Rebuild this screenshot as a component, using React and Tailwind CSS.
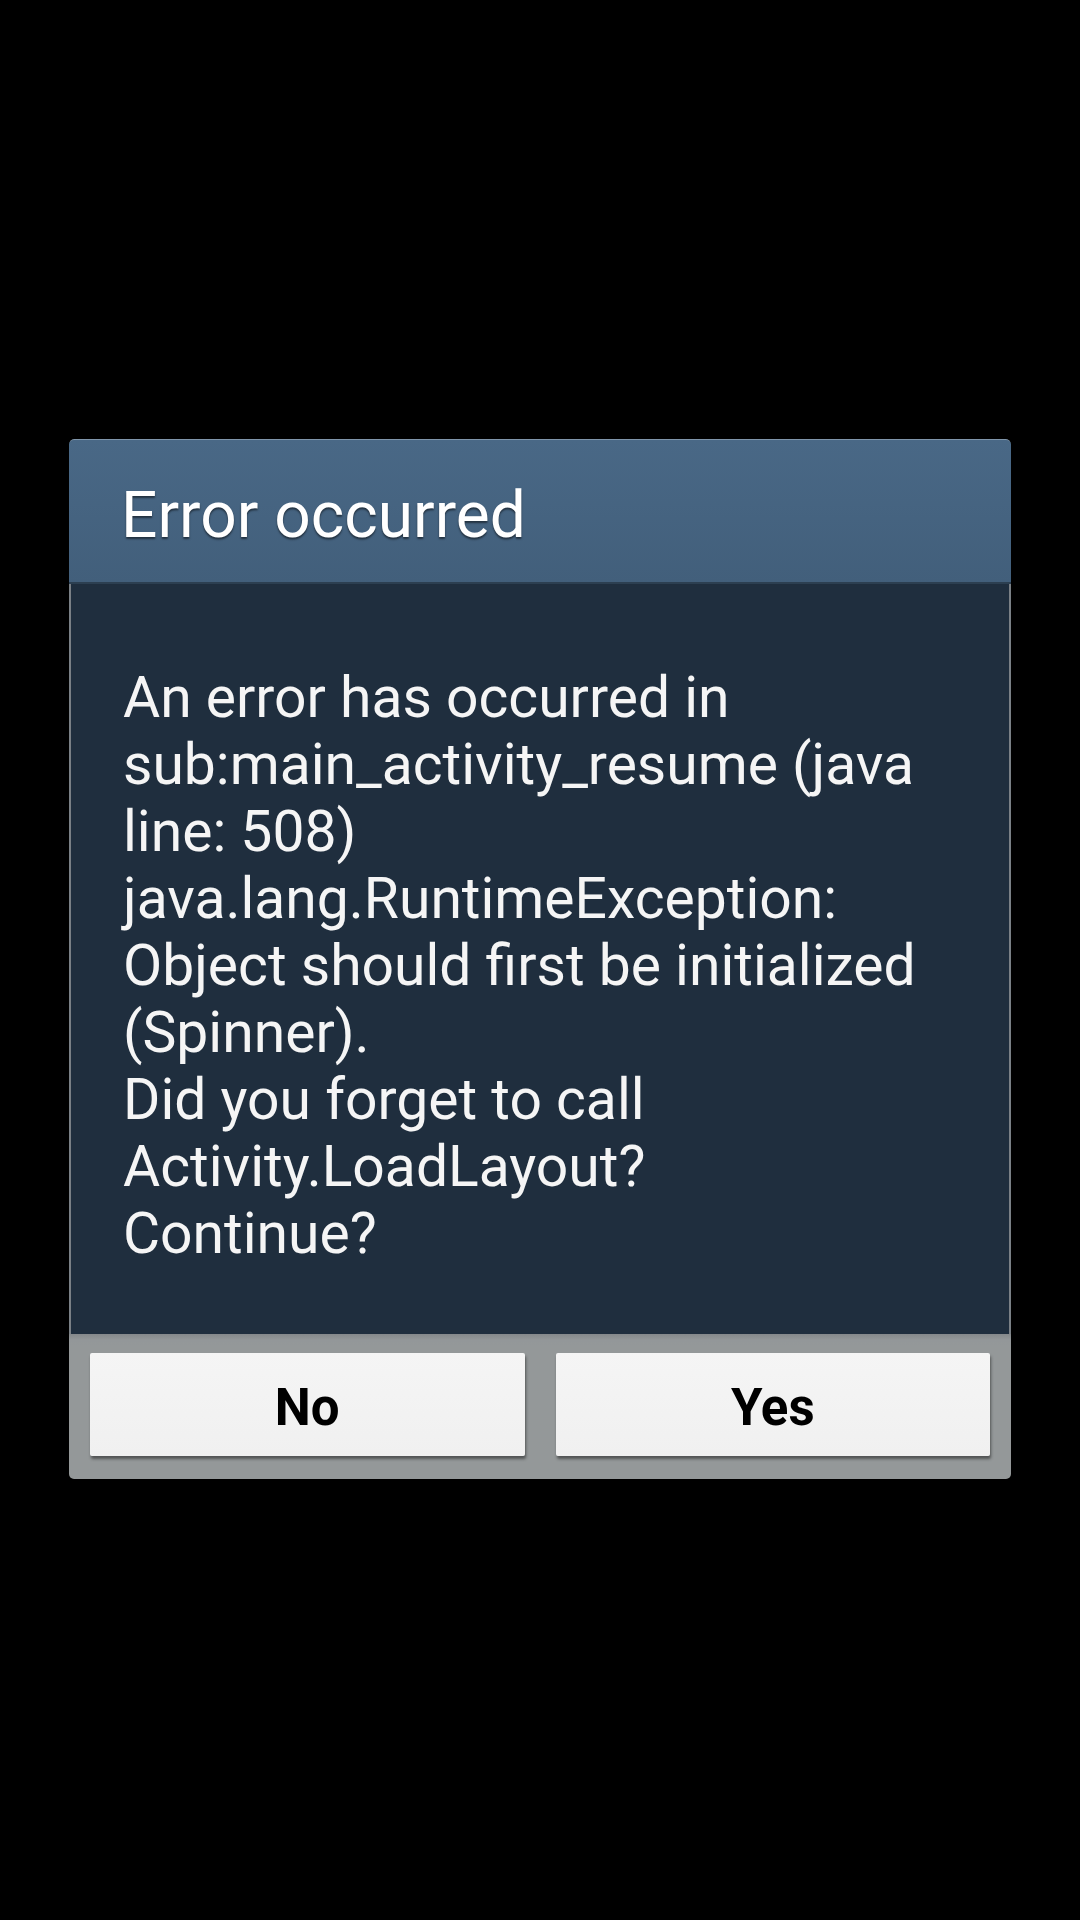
export default function App() {
  const lines = [
    "An error has occurred in",
    "sub:main_activity_resume (java",
    "line: 508)",
    "java.lang.RuntimeException:",
    "Object should first be initialized",
    "(Spinner).",
    "Did you forget to call",
    "Activity.LoadLayout?",
    "Continue?",
  ];
  return (
    <div className="w-[1080px] min-h-[1920px] bg-black flex flex-col items-center pt-[439px] font-['Roboto',_'Noto_Sans',_sans-serif]">
      <div className="w-[942px] rounded-[5px] overflow-hidden flex flex-col">
        <div className="h-[145px] bg-gradient-to-b from-[#496886] to-[#425f7b] border-t border-[#7f95aa] border-b-2 border-b-[#2c3f51] flex items-center pl-[52px] rounded-t-[5px]">
          <span className="text-[64px] leading-none text-white pt-[10px] [text-shadow:0_2px_2px_rgba(0,0,0,0.5)]">
            Error occurred
          </span>
        </div>
        <div className="bg-[#1f2e3e] border-x-2 border-[#7a8086] pt-[80px] pb-[67px] pl-[52px] text-[57px] leading-[67px] text-[#f5f5f5]">
          {lines.map((l) => (
            <div key={l} className="whitespace-nowrap">
              {l}
            </div>
          ))}
        </div>
        <div className="bg-gradient-to-b from-[#84888b] via-[#939799] to-[#949899] [background-size:100%_12px] bg-no-repeat bg-[#949899] px-[21px] pt-[19px] pb-[23px] flex gap-[31px]">
          <button className="flex-1 h-[103px] bg-gradient-to-b from-[#f5f5f5] to-[#f0f0f0] rounded-[2px] shadow-[1px_3px_3px_rgba(0,0,0,0.45)] flex items-center justify-center pt-[5px] text-[51px] font-bold text-black leading-none">
            No
          </button>
          <button className="flex-1 h-[103px] bg-gradient-to-b from-[#f5f5f5] to-[#f0f0f0] rounded-[2px] shadow-[1px_3px_3px_rgba(0,0,0,0.45)] flex items-center justify-center pt-[5px] text-[51px] font-bold text-black leading-none">
            Yes
          </button>
        </div>
      </div>
    </div>
  );
}
